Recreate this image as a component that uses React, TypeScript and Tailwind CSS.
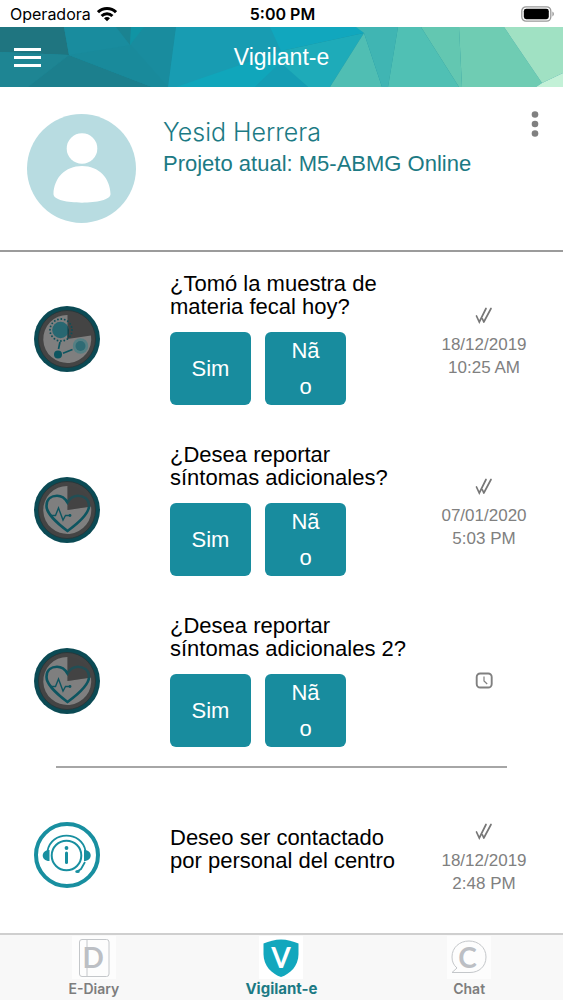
import React, { useState } from 'react';

interface Entry {
  id: number;
  icon: 'virus' | 'heart' | 'support';
  text: string;
  date?: string;
  time?: string;
}

const questions: Entry[] = [
  { id: 1, icon: 'virus', text: '¿Tomó la muestra de materia fecal hoy?', date: '18/12/2019', time: '10:25 AM' },
  { id: 2, icon: 'heart', text: '¿Desea reportar síntomas adicionales?', date: '07/01/2020', time: '5:03 PM' },
  { id: 3, icon: 'heart', text: '¿Desea reportar síntomas adicionales 2?' },
];

const contact: Entry = {
  id: 4,
  icon: 'support',
  text: 'Deseo ser contactado por personal del centro',
  date: '18/12/2019',
  time: '2:48 PM',
};

const StatusBar: React.FC = () => (
  <div className="h-[27px] shrink-0 grid grid-cols-3 items-center pl-2.5 pr-2 text-black font-['Inter',sans-serif]">
    <div className="flex items-center gap-1.5">
      <span className="text-base leading-none">Operadora</span>
      <svg className="w-5 h-4" viewBox="0 0 20 16" fill="none" stroke="#000" strokeWidth="3">
        <path d="M1 6.2C6 1.2 14 1.2 19 6.2" />
        <path d="M4.6 10C7.6 7 12.4 7 15.4 10" />
        <path d="M7 12.2C8.8 10.6 11.2 10.6 13 12.2L10 15.2Z" fill="#000" stroke="none" />
      </svg>
    </div>
    <span className="text-base leading-none font-semibold text-center">5:00 PM</span>
    <svg className="w-[34px] h-4 justify-self-end" viewBox="0 0 34 16">
      <rect x="0.8" y="0.8" width="29" height="14.4" rx="4.2" fill="none" stroke="#999" strokeWidth="1.3" />
      <rect x="2.8" y="2.8" width="25" height="10.4" rx="2.4" fill="#000" />
      <path d="M31.4 5.6C33.4 6.4 33.4 9.6 31.4 10.4Z" fill="#999" />
    </svg>
  </div>
);

const Header: React.FC = () => (
  <header className="relative h-[60px] shrink-0 overflow-hidden bg-[#188c9d]">
    <svg className="absolute inset-0 w-full h-full" viewBox="0 0 563 60" preserveAspectRatio="none">
      <polygon points="0,0 64,0 69,28 0,25" fill="#1f7580" />
      <polygon points="0,25 69,28 28,60 0,60" fill="#1e8593" />
      <polygon points="69,28 152,60 28,60" fill="#1c7f8d" />
      <polygon points="64,0 176,0 168,60 152,60 69,28" fill="#198c9e" />
      <polygon points="131,18 168,60 152,60 69,28" fill="#198a9b" />
      <polygon points="116,0 131,0 130,18" fill="#1b8391" />
      <polygon points="131,0 144,0 130,18" fill="#1094a4" />
      <polygon points="176,0 284,0 284,60 168,60" fill="#189cb2" />
      <polygon points="176,60 281,24 281,35 255,60" fill="#10a6bb" />
      <polygon points="281,35 308,60 255,60" fill="#159db4" />
      <polygon points="270,0 357,0 364,6 281,24" fill="#11a7be" />
      <polygon points="364,6 330,60 308,60 281,36 281,24" fill="#1eabb9" />
      <polygon points="364,6 382,60 330,60" fill="#50beb3" />
      <polygon points="356,0 398,0 388,60 382,60 364,6" fill="#40b5b3" />
      <polygon points="398,0 421,0 459,60 388,60" fill="#50c0b4" />
      <polygon points="421,0 459,0 462,60 459,60" fill="#63c7b1" />
      <polygon points="459,0 504,0 542,56 536,60 462,60" fill="#6fccb3" />
      <polygon points="504,0 563,0 563,46 542,56" fill="#a0e1c3" />
      <polygon points="563,46 542,56 536,60 563,60" fill="#c3f1d7" />
    </svg>
    <div className="relative h-full flex items-center justify-center">
      <button type="button" aria-label="Menu" className="absolute left-3.5 flex flex-col gap-[5px]">
        <span className="block w-[27px] h-[3px] bg-white" />
        <span className="block w-[27px] h-[3px] bg-white" />
        <span className="block w-[27px] h-[3px] bg-white" />
      </button>
      <h1 className="text-[23px] leading-7 text-white">Vigilant-e</h1>
    </div>
  </header>
);

const Profile: React.FC = () => (
  <section className="flex items-start pt-[27px] pb-[27px] pl-[27px] pr-5 border-b-2 border-[#9b9b9b]">
    <svg className="w-[109px] h-[109px] shrink-0" viewBox="0 0 109 109">
      <circle cx="54.5" cy="54.5" r="54.5" fill="#b8dce1" />
      <circle cx="55" cy="34.5" r="15.3" fill="#fff" />
      <path d="M26.5 80C27 64 38 52 55 52S83 64 83.5 80C84 91.5 26 91.5 26.5 80Z" fill="#fff" />
    </svg>
    <div className="ml-[27px] flex-1 text-[#1c7a84]">
      <h2 className="mt-1 text-[25px] leading-7 font-light font-['Inter',sans-serif]">Yesid Herrera</h2>
      <p className="mt-1 text-[22px] leading-7">Projeto atual: M5-ABMG Online</p>
    </div>
    <button type="button" aria-label="Más opciones" className="-mt-1 px-1">
      <svg className="w-2 h-7" viewBox="0 0 8 28" fill="#808080">
        <circle cx="4" cy="4.5" r="3.3" />
        <circle cx="4" cy="14" r="3.3" />
        <circle cx="4" cy="23.5" r="3.3" />
      </svg>
    </button>
  </section>
);

const EntryIcon: React.FC<{ name: Entry['icon'] }> = ({ name }) => {
  if (name === 'support') {
    return (
      <svg className="w-[66px] h-[66px] shrink-0" viewBox="0 0 66 66" fill="none" stroke="#188fa0">
        <circle cx="33" cy="33" r="31" strokeWidth="4" />
        <circle cx="32.5" cy="33.5" r="14.8" strokeWidth="2" />
        <path d="M13.5 29C17 8.5 48 8.5 51.5 29" strokeWidth="1.8" />
        <path d="M15.5 28V39C6.5 39 6.5 28 15.5 28ZM50 28V39C59 39 59 28 50 28Z" fill="#188fa0" stroke="none" />
        <circle cx="32.5" cy="26" r="1.9" fill="#188fa0" stroke="none" />
        <path d="M32.5 31V40.5" strokeWidth="3" strokeLinecap="round" />
        <path d="M51 40L47 47L44 49" strokeWidth="1.8" />
        <ellipse cx="43.5" cy="49.5" rx="2.3" ry="1.6" fill="#188fa0" stroke="none" />
      </svg>
    );
  }

  return (
    <svg className="w-[66px] h-[66px] shrink-0" viewBox="0 0 66 66" fill="none">
      <circle cx="33" cy="33" r="33" fill="#0b4a54" />
      <circle cx="33" cy="33" r="28.5" fill="#444" stroke="#26383b" strokeWidth="1" />
      <path d="M33.5 33V9A24 24 0 1 0 57 29.5Z" fill="#7f7f7f" />
      {name === 'virus' ? (
        <>
          <circle cx="27" cy="24" r="11" stroke="#0d4f59" strokeWidth="1.9" strokeLinecap="round" strokeDasharray="0 3.455" />
          <circle cx="26.5" cy="24" r="8.3" fill="#286771" />
          <path d="M33.5 19.5V32H34.5L35 24Z" fill="#143f46" />
          <circle cx="46.5" cy="40" r="7.7" fill="#557f83" />
          <circle cx="46.5" cy="40" r="5" fill="#2f6b74" />
          <circle cx="24" cy="48.5" r="4" fill="#0d5560" />
          <path d="M24.5 43L26 36M29 47.2L38.5 43.5" stroke="#0d5560" strokeWidth="1.7" />
        </>
      ) : (
        <>
          <path
            d="M33.5 54C26 48.5 12.5 37 12.5 29C12.5 21.5 18 18.8 23 18.8C28 18.8 31.5 22 33.5 25.5C35.5 22 39 18.8 44 18.8C49 18.8 55 21.5 55 29C55 37 41 48.5 33.5 54Z"
            stroke="#0d5560"
            strokeWidth="2.6"
          />
          <path d="M17 38.5H21.5L24.5 31L29 43L31.5 38.5H36" stroke="#0d5560" strokeWidth="1.4" />
          <circle cx="36" cy="38.5" r="1.4" fill="#0d5560" />
          <path d="M33.5 33V9A24 24 0 0 1 57 29.5Z" fill="#444" fillOpacity="0.4" />
        </>
      )}
    </svg>
  );
};

const EntryStatus: React.FC<{ date?: string; time?: string }> = ({ date, time }) => (
  <div className="w-[118px] shrink-0 flex flex-col items-center text-[17px] leading-[23px] text-[#808080]">
    <div className="h-[35px] flex items-center">
      {date ? (
        <svg className="w-[18px] h-[18px]" viewBox="0 0 18 18" fill="none" stroke="#777" strokeWidth="1.7" strokeLinecap="round">
          <path d="M1.5 9L4.3 15L11 1.5M8.8 15L16 1.5M7.5 12L8.8 15" />
        </svg>
      ) : (
        <svg className="w-[18px] h-[18px]" viewBox="0 0 18 18" fill="none" stroke="#808080">
          <rect x="1.7" y="1.5" width="15" height="14" rx="3.5" strokeWidth="1.9" />
          <path d="M9 4.5V9L12.2 12" strokeWidth="1.2" />
        </svg>
      )}
    </div>
    {date && <span>{date}</span>}
    {time && <span>{time}</span>}
  </div>
);

const QuestionRow: React.FC<{ entry: Entry }> = ({ entry }) => (
  <li className="flex items-center pl-[34px] pr-5">
    <EntryIcon name={entry.icon} />
    <div className="ml-[70px] pr-3 flex-1">
      <p className="text-[22px] leading-[23px]">{entry.text}</p>
      <div className="mt-3.5 flex gap-3.5">
        <button type="button" className="w-[81px] h-[73px] px-5 rounded-md bg-[#188c9e] text-white text-[22px] leading-9">
          Sim
        </button>
        <button type="button" className="w-[81px] h-[73px] px-6 rounded-md bg-[#188c9e] text-white text-[22px] leading-9 break-all">
          Não
        </button>
      </div>
    </div>
    <EntryStatus date={entry.date} time={entry.time} />
  </li>
);

const DiaryIcon = () => (
  <svg className="w-11 h-[43px] bg-[#fdfdfd]" viewBox="0 0 44 43">
    <rect x="7.5" y="3.5" width="29.5" height="37" rx="2.5" fill="none" stroke="#c4c7ca" />
    <path d="M15 4V40" stroke="#c4c7ca" />
    <text x="10.500" y="32" fontSize="28" fontWeight="700" fontFamily="Lato, sans-serif" fill="#bcbfc4">D</text>
  </svg>
);

const ShieldIcon = () => (
  <svg className="w-11 h-[43px] bg-white" viewBox="0 0 44 43">
    <path d="M22 3.5C28 3.5 34 5.5 39.5 7.5V18C39.5 30 31 38 22 41C13 38 4.5 30 4.5 18V7.5C10 5.5 16 3.5 22 3.5Z" fill="#12a7bd" />
    <text x="22" y="32" textAnchor="middle" fontSize="28" fontWeight="700" fontFamily="Lato, sans-serif" fill="#fff">V</text>
  </svg>
);

const ChatIcon = () => (
  <svg className="w-11 h-[43px] bg-[#fdfdfd]" viewBox="0 0 44 43">
    <path d="M5 36.500L10 32C6.500 29 5 25.500 5 21C5 11.500 12.500 5 22 5S39 11.500 39 21S32 36.500 23 36.500Z" fill="none" stroke="#c4c7ca" />
    <text x="20.500" y="32" textAnchor="middle" fontSize="28" fontWeight="700" fontFamily="Lato, sans-serif" fill="#bcbfc4">C</text>
  </svg>
);

const tabs = [
  { name: 'E-Diary', icon: <DiaryIcon /> },
  { name: 'Vigilant-e', icon: <ShieldIcon /> },
  { name: 'Chat', icon: <ChatIcon /> },
];

const App: React.FC = () => {
  const [activeTab, setActiveTab] = useState('Vigilant-e');

  return (
    <div className="min-h-screen flex flex-col bg-white text-black font-['Liberation_Sans',Arial,sans-serif]">
      <StatusBar />
      <Header />

      <main className="flex-1">
        <Profile />

        {/* Questions */}
        <ul className="pt-5 flex flex-col gap-[38px]">
          {questions.map((q) => (
            <QuestionRow key={q.id} entry={q} />
          ))}
        </ul>
        <hr className="mt-[19px] mx-[10%] border-t-2 border-[#a6a6a6]" />

        {/* Contact request */}
        <div className="flex items-center pt-[46px] pb-9 pl-[34px] pr-5">
          <EntryIcon name={contact.icon} />
          <p className="ml-[70px] pr-3 pb-3 flex-1 text-[22px] leading-[23px]">{contact.text}</p>
          <EntryStatus date={contact.date} time={contact.time} />
        </div>
      </main>

      <nav className="shrink-0 grid grid-cols-3 border-t-2 border-[#cfcfcf] bg-[#f8f8f8] font-['Inter',sans-serif]">
        {tabs.map((tab) => (
          <button
            key={tab.name}
            type="button"
            onClick={() => setActiveTab(tab.name)}
            className={`flex flex-col items-center pt-px pb-0.5 leading-[19px] ${
              activeTab === tab.name ? 'text-[15px] font-bold text-[#1c7a84]' : 'text-sm font-semibold text-[#7d7d7d]'
            }`}
          >
            {tab.icon}
            {tab.name}
          </button>
        ))}
      </nav>
    </div>
  );
};

export default App;
